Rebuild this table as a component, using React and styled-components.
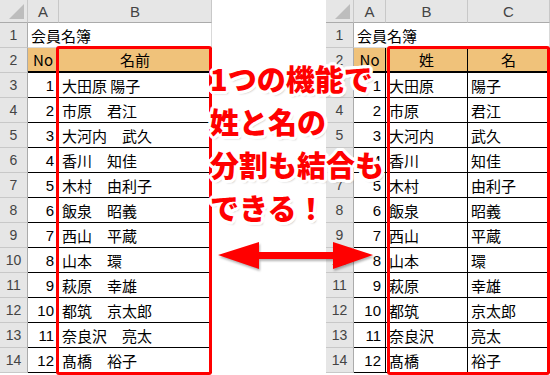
import React from 'react';
import styled, { createGlobalStyle } from 'styled-components';

const GlobalStyle = createGlobalStyle`
  html, body {
    margin: 0;
    padding: 0;
    background: #ffffff;
  }
  body {
    width: 550px;
    height: 375px;
    overflow: hidden;
    font-family: "Noto Sans CJK JP", "Liberation Sans", sans-serif;
  }
`;

const Page = styled.div`
  position: relative;
  display: flex;
  justify-content: space-between;
  align-items: flex-start;
  width: 550px;
  height: 375px;
  overflow: hidden;
  background: #ffffff;
`;

const Sheet = styled.div`
  position: relative;
  display: grid;
  grid-template-columns: ${p => p.$cols};
  grid-template-rows: 23px repeat(14, 25px);
`;

const HeadBase = styled.div`
  box-sizing: border-box;
  display: flex;
  align-items: center;
  justify-content: center;
  background: #e6e6e6;
  color: #444444;
  font-family: "Liberation Sans", Arial, sans-serif;
  font-size: 14px;
`;

const Corner = styled(HeadBase)`
  position: relative;
  border-right: 1px solid #c8c8c8;
  border-bottom: 1px solid #ababab;

  &::after {
    content: '';
    position: absolute;
    right: 3px;
    bottom: 3px;
    width: 0;
    height: 0;
    border-left: 15px solid transparent;
    border-bottom: 15px solid #bdbdbd;
  }
`;

const ColHead = styled(HeadBase)`
  border-right: 1px solid #c8c8c8;
  border-bottom: 1px solid #ababab;
  font-size: 15px;
`;

const RowHead = styled(HeadBase)`
  border-right: 1px solid #ababab;
  border-bottom: 1px solid #c8c8c8;
`;

const Cell = styled.div`
  box-sizing: border-box;
  display: flex;
  align-items: center;
  justify-content: ${p => (p.$align === 'right' ? 'flex-end' : p.$align === 'center' ? 'center' : 'flex-start')};
  padding: 0 ${p => (p.$align === 'right' ? '4px' : '0')} 0 ${p => (p.$align === 'left' ? '3px' : '0')};
  background: ${p => p.$fill || '#ffffff'};
  border-right: 1px solid ${p => (p.$boxed ? '#000000' : '#d9d9d9')};
  border-bottom: ${p => p.$under || '1px solid #d9d9d9'};
  color: #000000;
  font-family: ${p => (p.$num ? '"Liberation Sans", Arial, sans-serif' : '"Noto Sans CJK JP", sans-serif')};
  font-size: 15px;
  white-space: pre;
  overflow: visible;
`;

const Frame = styled.div`
  position: absolute;
  top: 46px;
  left: ${p => p.$left}px;
  width: ${p => p.$width}px;
  height: 329px;
  box-sizing: border-box;
  border: 3px solid #ff0000;
  border-radius: 3px;
  pointer-events: none;
`;

const Callout = styled.div`
  position: absolute;
  left: 210px;
  top: 57px;
  font-family: "Noto Sans CJK JP", sans-serif;
  font-weight: 900;
  font-size: 29px;
  line-height: 43px;
  color: #ff0000;
  white-space: pre;
  text-shadow:
    3px 0 0 #fff, -3px 0 0 #fff, 0 3px 0 #fff, 0 -3px 0 #fff,
    2px 2px 0 #fff, -2px 2px 0 #fff, 2px -2px 0 #fff, -2px -2px 0 #fff,
    3px 1px 0 #fff, -3px 1px 0 #fff, 3px -1px 0 #fff, -3px -1px 0 #fff,
    1px 3px 0 #fff, -1px 3px 0 #fff, 1px -3px 0 #fff, -1px -3px 0 #fff,
    2px 3px 2px rgba(0, 0, 0, 0.25);
`;

const Arrow = styled.svg`
  position: absolute;
  left: 214px;
  top: 238px;
  filter: drop-shadow(1px 2px 1px rgba(0, 0, 0, 0.3));
`;

const ORANGE = '#f0c27a';
const HEAD_LINE = '2px solid #000000';
const ROW_LINE = '1px solid #000000';

const members = [
  { sei: '大田原', mei: '陽子', gap: ' ' },
  { sei: '市原', mei: '君江' },
  { sei: '大河内', mei: '武久' },
  { sei: '香川', mei: '知佳' },
  { sei: '木村', mei: '由利子' },
  { sei: '飯泉', mei: '昭義' },
  { sei: '西山', mei: '平蔵' },
  { sei: '山本', mei: '環' },
  { sei: '萩原', mei: '幸雄' },
  { sei: '都筑', mei: '京太郎' },
  { sei: '奈良沢', mei: '亮太' },
  { sei: '髙橋', mei: '裕子' },
];

const HeaderRows = ({ letters, titles }) => (
  <>
    <Corner />
    {letters.map(l => (
      <ColHead key={l}>{l}</ColHead>
    ))}
    <RowHead>1</RowHead>
    <Cell $align="left" style={{ gridColumn: `span ${letters.length}` }}>会員名簿</Cell>
    <RowHead>2</RowHead>
    <Cell $align="center" $fill={ORANGE} $boxed $under={HEAD_LINE}>No</Cell>
    {titles.map(t => (
      <Cell key={t} $align="center" $fill={ORANGE} $boxed $under={HEAD_LINE}>{t}</Cell>
    ))}
  </>
);

const JoinedSheet = () => (
  <Sheet $cols="28px 31px 153px">
    <HeaderRows letters={['A', 'B']} titles={['名前']} />
    {members.map((m, i) => (
      <React.Fragment key={m.sei}>
        <RowHead>{i + 3}</RowHead>
        <Cell $align="right" $num $boxed $under={ROW_LINE}>{i + 1}</Cell>
        <Cell $align="left" $boxed $under={ROW_LINE}>{m.sei + (m.gap || '　') + m.mei}</Cell>
      </React.Fragment>
    ))}
    <Frame $left={56} $width={156} />
  </Sheet>
);

const SplitSheet = () => (
  <Sheet $cols="28px 32px 82px 82px">
    <HeaderRows letters={['A', 'B', 'C']} titles={['姓', '名']} />
    {members.map((m, i) => (
      <React.Fragment key={m.sei}>
        <RowHead>{i + 3}</RowHead>
        <Cell $align="right" $num $boxed $under={ROW_LINE}>{i + 1}</Cell>
        <Cell $align="left" $boxed $under={ROW_LINE}>{m.sei}</Cell>
        <Cell $align="left" $boxed $under={ROW_LINE}>{m.mei}</Cell>
      </React.Fragment>
    ))}
    <Frame $left={61} $width={163} />
  </Sheet>
);

const App = () => (
  <>
    <GlobalStyle />
    <Page>
      <JoinedSheet />
      <SplitSheet />
      <Callout>{'1つの機能で\n姓と名の\n分割も結合も\nできる！'}</Callout>
      <Arrow width="164" height="36" viewBox="0 0 164 36">
        <polygon
          fill="#ff0000"
          points="4,17 45,4 45,14 119,14 119,4 159,17 119,31 119,21 45,21 45,31"
        />
      </Arrow>
    </Page>
  </>
);

export default App;
